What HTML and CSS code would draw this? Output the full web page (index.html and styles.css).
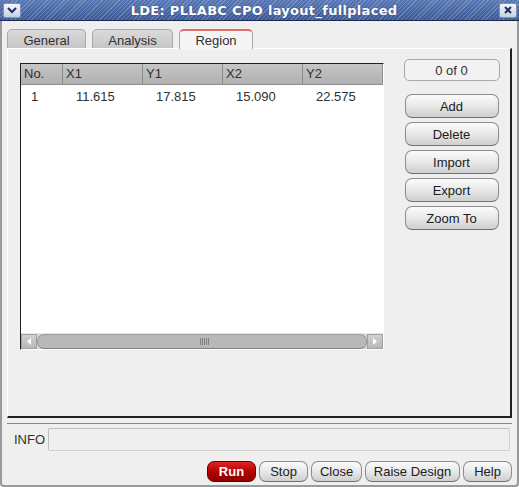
FILE: index.html
```html
<!DOCTYPE html>
<html>
<head>
<meta charset="utf-8">
<link rel="stylesheet" href="styles.css">
</head>
<body>
<div class="window">
  <div class="titlebar">
    <div class="tbtn"><svg width="12" height="8" viewBox="0 0 12 8"><path d="M2 2 L6 6 L10 2" fill="none" stroke="#203060" stroke-width="2"/></svg></div>
    <div class="title">LDE: PLLABC CPO layout_fullplaced</div>
    <div class="tbtn close"><svg width="10" height="10" viewBox="0 0 10 10"><path d="M2 2 L8 8 M8 2 L2 8" stroke="#203060" stroke-width="2"/></svg></div>
  </div>
  <div class="tabs">
    <div class="tab t1">General</div>
    <div class="tab t2">Analysis</div>
    <div class="tab sel">Region</div>
  </div>
  <div class="panel">
    <div class="table">
      <div class="thead">
        <div class="th c0">No.</div>
        <div class="th c1">X1</div>
        <div class="th c1">Y1</div>
        <div class="th c1">X2</div>
        <div class="th c1 last">Y2</div>
      </div>
      <div class="tbody">
        <div class="tr">
          <div class="td c0">1</div>
          <div class="td c1">11.615</div>
          <div class="td c1">17.815</div>
          <div class="td c1">15.090</div>
          <div class="td c1">22.575</div>
        </div>
      </div>
      <div class="hscroll">
        <div class="arrow"><svg width="8" height="9" viewBox="0 0 8 9"><path d="M6 1 L2 4.5 L6 8 Z" fill="#fff"/></svg></div>
        <div class="thumb"><span class="grip"></span></div>
        <div class="arrow"><svg width="8" height="9" viewBox="0 0 8 9"><path d="M2 1 L6 4.5 L2 8 Z" fill="#fff"/></svg></div>
      </div>
    </div>
    <div class="side">
      <div class="count">0 of 0</div>
      <div class="btn">Add</div>
      <div class="btn">Delete</div>
      <div class="btn">Import</div>
      <div class="btn">Export</div>
      <div class="btn">Zoom To</div>
    </div>
  </div>
  <div class="sep"></div>
  <div class="info">
    <span class="infolabel">INFO</span>
    <div class="infobox"></div>
  </div>
  <div class="actions">
    <div class="abtn run">Run</div>
    <div class="abtn w49">Stop</div>
    <div class="abtn w51">Close</div>
    <div class="abtn w95">Raise Design</div>
    <div class="abtn w49">Help</div>
  </div>
</div>
</body>
</html>
```
FILE: styles.css
```css
html, body {
  margin: 0;
  padding: 0;
  background: #efefef;
}
body {
  width: 519px;
  height: 487px;
  overflow: hidden;
  font-family: "Liberation Sans", Arial, sans-serif;
  font-size: 13px;
  color: #303030;
}
.window {
  width: 519px;
  height: 487px;
  box-sizing: border-box;
  border-left: 2px solid #9a9a9a;
  border-right: 2px solid #9a9a9a;
  border-bottom: 2px solid #9a9a9a;
  border-bottom-left-radius: 4px;
  border-bottom-right-radius: 4px;
  display: flex;
  flex-direction: column;
  background: #efefef;
}
.titlebar {
  height: 20px;
  margin: 0 -2px;
  border-bottom: 1px solid #1a2a50;
  background:
    repeating-linear-gradient(135deg, rgba(255,255,255,0.2) 0 1px, rgba(255,255,255,0) 1px 3px),
    linear-gradient(#5676b4, #3a5896);
  display: flex;
  align-items: center;
  padding: 0 2px 0 3px;
}
.tbtn {
  width: 18px;
  height: 15px;
  box-sizing: border-box;
  border: 1px solid #8090b0;
  border-radius: 2px;
  background: linear-gradient(#f4f6fa, #c8d0e0);
  display: flex;
  align-items: center;
  justify-content: center;
}
.title {
  flex: 1;
  text-align: center;
  color: #fff;
  font-family: "DejaVu Sans", sans-serif;
  font-weight: bold;
  font-size: 13px;
  letter-spacing: 0.3px;
  text-shadow: 0 0 1px #203060;
  padding-left: 8px;
}
.tabs {
  display: flex;
  gap: 6px;
  margin-top: 7px;
  padding-left: 5px;
  height: 20px;
  align-items: flex-end;
}
.tab {
  height: 19px;
  box-sizing: border-box;
  border: 1px solid #a8a8a8;
  border-bottom: none;
  border-radius: 5px 5px 0 0;
  background: linear-gradient(#dadada, #c6c6c6);
  display: flex;
  align-items: center;
  justify-content: center;
  padding-top: 2px;
}
.t1 { width: 79px; }
.t2 { width: 81px; }
.tab.sel {
  width: 74px;
  height: 20px;
  background: #f4f4f4;
  border-top: 2px solid #e06c6c;
  padding-top: 1px;
  position: relative;
  z-index: 1;
  margin-bottom: -1px;
}
.panel {
  margin: 0 5px 0 5px;
  height: 370px;
  box-sizing: border-box;
  border-top: 1px solid #ffffff;
  border-left: 1px solid #ffffff;
  border-right: 2px solid #202020;
  border-bottom: 2px solid #202020;
  background: #efefef;
  display: flex;
  padding: 14px 0 0 12px;
}
.table {
  width: 364px;
  height: 287px;
  box-sizing: border-box;
  border-top: 1px solid #202020;
  border-left: 1px solid #202020;
  border-right: 1px solid #ffffff;
  border-bottom: 1px solid #ffffff;
  background: #fff;
  display: flex;
  flex-direction: column;
}
.thead {
  display: flex;
  height: 20px;
  background: linear-gradient(#c6c6c6, #b0b0b0);
  border-bottom: 1px solid #909090;
}
.th {
  box-sizing: border-box;
  padding-left: 3px;
  line-height: 20px;
  border-right: 1px solid #8c8c8c;
  color: #303030;
}
.c0 { width: 42px; }
.c1 { width: 80px; }
.tbody {
  flex: 1;
}
.tr {
  display: flex;
  height: 22px;
  align-items: center;
}
.td {
  box-sizing: border-box;
}
.td.c0 { padding-left: 10px; }
.td.c1 { padding-left: 13px; }
.hscroll {
  height: 15px;
  display: flex;
  background: #d8d8d8;
  border-top: 1px solid #e8e8e8;
}
.arrow {
  width: 16px;
  background: linear-gradient(#d0d0d0, #b8b8b8);
  border: 1px solid #a0a0a0;
  box-sizing: border-box;
  display: flex;
  align-items: center;
  justify-content: center;
}
.thumb {
  flex: 1;
  border-radius: 7px;
  background: #b8b8b8;
  border: 1px solid #999;
  border-bottom-color: #808080;
  display: flex;
  align-items: center;
  justify-content: center;
}
.grip {
  width: 9px;
  height: 7px;
  background: repeating-linear-gradient(90deg, #808080 0 1px, transparent 1px 2px);
  margin-left: 4px;
}
.side {
  margin-left: 20px;
  margin-top: -4px;
  width: 95px;
  display: flex;
  flex-direction: column;
  align-items: center;
}
.count {
  width: 96px;
  height: 22px;
  box-sizing: border-box;
  border: 1px solid #a8a8a8;
  border-radius: 5px;
  background: #f2f2f2;
  display: flex;
  align-items: center;
  justify-content: center;
  margin-bottom: 13px;
}
.btn, .abtn {
  box-sizing: border-box;
  border: 1px solid #8c8c8c;
  border-bottom-color: #707070;
  border-radius: 7px;
  background: linear-gradient(#fbfbfb 0%, #e8e8e8 50%, #cfcfcf 100%);
  display: flex;
  align-items: center;
  justify-content: center;
  color: #202020;
}
.btn {
  width: 94px;
  height: 24px;
  margin-bottom: 4px;
}
.sep {
  margin: 5px 5px 0;
  border-top: 1px solid #8a8a8a;
  height: 0;
}
.info {
  display: flex;
  align-items: center;
  margin-top: 4px;
  padding-left: 12px;
  gap: 4px;
  height: 23px;
}
.infolabel {
  width: 30px;
  color: #303030;
}
.infobox {
  width: 462px;
  height: 23px;
  box-sizing: border-box;
  border: 1px solid #d0d0d0;
  border-top-color: #c0c0c0;
  border-left-color: #c0c0c0;
  border-radius: 2px;
  background: #efefef;
}
.actions {
  display: flex;
  justify-content: flex-end;
  gap: 3px;
  margin-top: 10px;
  padding-right: 5px;
}
.abtn {
  height: 21px;
}
.run {
  width: 49px;
  background: linear-gradient(#e02424, #b00000 55%, #8a0000);
  border-color: #600000;
  color: #fff;
  font-weight: bold;
}
.w49 { width: 49px; }
.w51 { width: 51px; }
.w95 { width: 95px; }
```
